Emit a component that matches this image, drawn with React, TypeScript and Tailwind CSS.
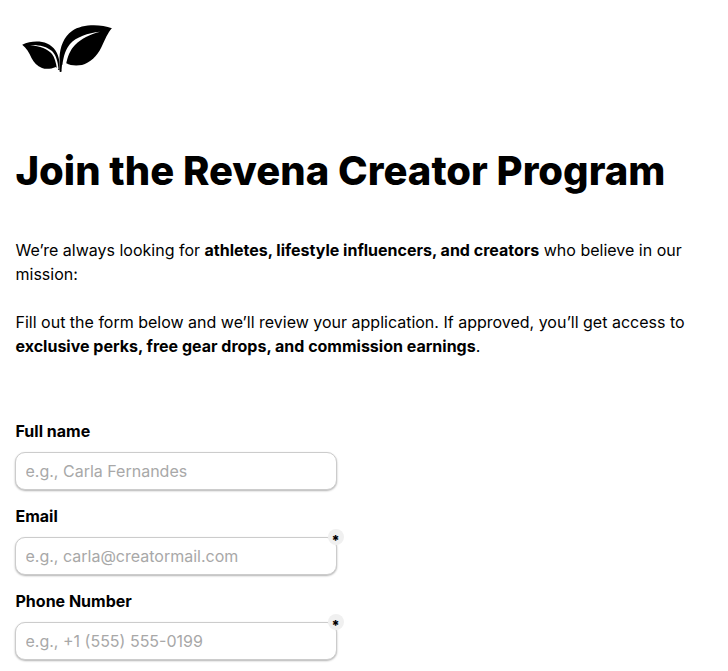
import React from 'react';

const LeafLogo = () => (
  <svg width="100" height="60" viewBox="0 0 100 60" fill="#000">
    {/* left leaf */}
    <path d="M2.2 24.7C10 21 20 20.5 27 23.5C34 26.5 38.5 33 39.4 42L39.8 51.7L41.2 51.7L41.2 50L38.5 50C38 49 37 48 36 47C31 49 26 49.5 22 48C17 46 14 42.5 11.5 38C9 32.5 6.5 28 2.2 24.7Z" />
    {/* right leaf */}
    <path d="M91.9 8.3C80 4 62 4 52 11C44 16.5 39.8 27 39.5 38L39.8 51.7L41.4 51.7L42 45L46.5 43.3C50 45.5 56 46 62 45C70 42.5 77 36.5 81.5 27C85.5 19 87.5 13 91.9 8.3Z" />
    {/* white crescents */}
    <path fill="#fff" d="M10 25C20 26 28 29 32 34C34.5 37.5 36 42 37 49L38.5 49C38 42 36 35 32 31C27 26.5 18 24.5 10 25Z" />
    <path fill="#fff" d="M80 11.7C68 13 56 17 50 24C46 29 43.5 35 42.3 46L46 44.5C47.5 37 50 30 55 25C61 19 70 14 80 11.7Z" />
  </svg>
);

const Field = ({ label, placeholder, required }: { label: string; placeholder: string; required?: boolean }) => (
  <div className="flex flex-col">
    <label className="h-[24px] text-[16px] leading-[24px] font-bold text-black">{label}</label>
    <div className="relative -ml-[0.5px] mt-[9px] w-[322px]">
      <input
        type="text"
        placeholder={placeholder}
        className="block h-[38px] w-full rounded-[10px] border border-[#cccccc] bg-white px-[9.5px] text-[16px] text-black shadow-[0_1px_2px_rgba(0,0,0,0.3)] outline-none placeholder:text-[#a8a8a8]"
      />
      {required && (
        <span className="absolute right-[-7px] top-[-8px] flex h-[16px] w-[16px] items-start justify-center rounded-full bg-[#f0f0f0] pr-px text-[14px] leading-[24px] font-extrabold text-black">
          *
        </span>
      )}
    </div>
  </div>
);

export default function App() {
  return (
    <div className="min-h-[671px] overflow-hidden bg-white font-['Inter',sans-serif] text-black">
      <div className="pl-[20px] pt-[20px]">
        <LeafLogo />
      </div>
      <div className="px-[15.5px]">
        <h1 className="mt-[63px] text-[40px] leading-[56px] font-extrabold">Join the Revena Creator Program</h1>
        <div className="mt-[39px] text-[16px] leading-[24px]">
          <p>
            We’re always looking for <strong className="font-bold">athletes, lifestyle influencers, and creators</strong> who believe in our mission:
          </p>
          <p className="mt-[24px]">
            Fill out the form below and we’ll review your application. If approved, you’ll get access to{' '}
            <strong className="font-bold">exclusive perks, free gear drops, and commission earnings</strong>.
          </p>
        </div>
        <div className="mt-[61px] flex flex-col gap-[14px]">
          <Field label="Full name" placeholder="e.g., Carla Fernandes" />
          <Field label="Email" placeholder="e.g., carla@creatormail.com" required />
          <Field label="Phone Number" placeholder="e.g., +1 (555) 555-0199" required />
        </div>
      </div>
    </div>
  );
}
